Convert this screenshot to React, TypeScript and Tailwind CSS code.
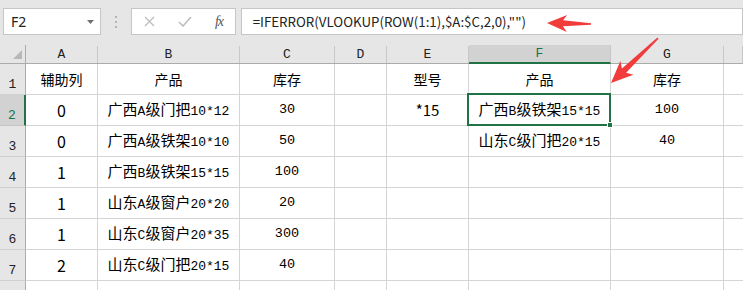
import type { ReactNode } from 'react'

const YAHEI = "font-['Noto_Sans_CJK_SC',sans-serif]"
const GRID = 'grid grid-cols-[26px_72px_142px_95px_52px_82px_142px_113px_19px]'

// SimSun-like text: CJK in sans CJK, ascii runs in a narrow monospace
function Sim({ t }: { t: string }) {
  const parts = t.match(/[\x00-\x7f]+|[^\x00-\x7f]+/g) ?? []
  return (
    <span className="font-['Noto_Sans_CJK_SC',sans-serif] text-[15px]">
      {parts.map((p, i) =>
        /^[\x00-\x7f]/.test(p) ? (
          <span key={i} className="font-['Liberation_Mono',monospace] text-[13px]">
            {p}
          </span>
        ) : (
          <span key={i}>{p}</span>
        ),
      )}
    </span>
  )
}

function Num({ v }: { v: string }) {
  return <span className="font-['Liberation_Mono',monospace] text-[13.5px]">{v}</span>
}

function Big({ v }: { v: string }) {
  return <span className={`${YAHEI} text-[16px]`}>{v}</span>
}

function Head({ v }: { v: string }) {
  return <span className={`${YAHEI} text-[14px]`}>{v}</span>
}

type Row = { n: number; cells: ReactNode[] }

const rows: Row[] = [
  { n: 1, cells: [<Head v="辅助列" />, <Head v="产品" />, <Head v="库存" />, null, <Head v="型号" />, <Head v="产品" />, <Head v="库存" />] },
  { n: 2, cells: [<Big v="0" />, <Sim t="广西A级门把10*12" />, <Num v="30" />, null, <span className={`${YAHEI} text-[15px]`}>*15</span>, <Sim t="广西B级铁架15*15" />, <Num v="100" />] },
  { n: 3, cells: [<Big v="0" />, <Sim t="广西A级铁架10*10" />, <Num v="50" />, null, null, <Sim t="山东C级门把20*15" />, <Num v="40" />] },
  { n: 4, cells: [<Big v="1" />, <Sim t="广西B级铁架15*15" />, <Num v="100" />, null, null, null, null] },
  { n: 5, cells: [<Big v="1" />, <Sim t="山东A级窗户20*20" />, <Num v="20" />, null, null, null, null] },
  { n: 6, cells: [<Big v="1" />, <Sim t="山东C级窗户20*35" />, <Num v="300" />, null, null, null, null] },
  { n: 7, cells: [<Big v="2" />, <Sim t="山东C级门把20*15" />, <Num v="40" />, null, null, null, null] },
  { n: 8, cells: [null, null, null, null, null, null, null] },
]

const letters = ['A', 'B', 'C', 'D', 'E', 'F', 'G', '']

function Arrow({ x, y, angle, len, head, half }: { x: number; y: number; angle: number; len: number; head: number; half: number }) {
  const pts = [
    [0, 0],
    [head, -half],
    [head - 4, -3],
    [len, -0.8],
    [len, 0.8],
    [head - 4, 3],
    [head, half],
  ]
    .map((p) => p.join(','))
    .join(' ')
  return <polygon points={pts} fill="#f23b3b" transform={`translate(${x} ${y}) rotate(${angle})`} />
}

export default function App() {
  return (
    <div className="relative w-[743px] h-[290px] overflow-hidden bg-white text-black">
      {/* formula bar */}
      <div className="h-[45px] bg-[#e6e6e6] flex items-start pt-[8px] pl-[3px]">
        <div className="w-[101px] h-[27px] bg-white border border-[#c6c6c6] flex items-center justify-between pl-[7px] pr-[6px]">
          <span className="font-['Noto_Sans',sans-serif] text-[14px] text-[#222]">F2</span>
          <svg width="7" height="4" viewBox="0 0 7 4">
            <path d="M0 0h7L3.5 4z" fill="#707070" />
          </svg>
        </div>
        <div className="w-[31px] h-[27px] flex flex-col items-center justify-center gap-[3px]">
          <span className="w-[2px] h-[2px] bg-[#b4b4b4]" />
          <span className="w-[2px] h-[2px] bg-[#b4b4b4]" />
          <span className="w-[2px] h-[2px] bg-[#b4b4b4]" />
        </div>
        <div className="w-[108px] h-[27px] bg-white border border-[#c6c6c6] flex items-center pl-[12px] gap-[23px]">
          <svg width="11" height="11" viewBox="0 0 11 11">
            <path d="M1 1l9 9M10 1l-9 9" stroke="#bdbdbd" strokeWidth="1.3" />
          </svg>
          <svg width="14" height="11" viewBox="0 0 14 11">
            <path d="M1 6l4 4 8-9" stroke="#bdbdbd" strokeWidth="1.6" fill="none" />
          </svg>
          <span className="font-['Liberation_Serif',serif] italic text-[14px] text-[#555] tracking-[-1px]">fx</span>
        </div>
        <div className="ml-[5px] w-[520px] h-[27px] bg-white border border-[#c6c6c6] flex items-center pl-[11px]">
          <span className={`${YAHEI} text-[13.3px] text-[#222]`}>=IFERROR(VLOOKUP(ROW(1:1),$A:$C,2,0),"")</span>
        </div>
      </div>

      {/* column headers */}
      <div className={`${GRID} h-[19px] bg-[#e6e6e6] border-b border-[#ababab]`}>
        <div className="border-r border-[#ababab] flex items-end justify-end pr-[3px] pb-[4px]">
          <svg width="9" height="9" viewBox="0 0 9 9">
            <path d="M9 0v9H0z" fill="#b8b8b8" />
          </svg>
        </div>
        {letters.map((l, i) => (
          <div
            key={i}
            className={
              l === 'F'
                ? 'bg-[#d2d2d2] border-r border-[#c6c6c6] border-b-2 border-b-[#217346] -mb-[1px] flex items-center justify-center text-[#217346]'
                : 'border-r border-[#c8c8c8] mt-[1px] flex items-center justify-center text-[#222]'
            }
          >
            <span className="font-['Liberation_Mono',monospace] text-[13px] leading-none">{l}</span>
          </div>
        ))}
      </div>

      {/* rows */}
      {rows.map((r) => (
        <div key={r.n} className={`${GRID} h-[31px]`}>
          <div
            className={
              r.n === 2
                ? 'bg-[#d2d2d2] border-r-2 border-r-[#217346] border-b border-b-[#c6c6c6] flex items-end justify-center pb-[1px] text-[#217346]'
                : 'bg-[#e6e6e6] border-r border-r-[#ababab] border-b border-b-[#d0d0d0] flex items-end justify-center pb-[1px] text-[#222]'
            }
          >
            {r.n < 8 && <span className="font-['Liberation_Mono',monospace] text-[13px] leading-none pb-[2px]">{r.n}</span>}
          </div>
          {r.cells.map((c, i) => (
            <div key={i} className="relative border-r border-b border-[#d4d4d4] flex items-center justify-center whitespace-nowrap">
              {c}
              {r.n === 2 && i === 5 && (
                <div className="absolute -left-[2px] -top-[2px] -right-[1px] -bottom-[1px] border-2 border-[#217346] z-10">
                  <div className="absolute -right-[4px] -bottom-[4px] w-[6px] h-[6px] bg-[#217346] border border-white" />
                </div>
              )}
            </div>
          ))}
          <div className="border-b border-[#d4d4d4]" />
        </div>
      ))}

      {/* annotation arrows */}
      <svg className="absolute inset-0 pointer-events-none z-20" width="743" height="290">
        <Arrow x={547} y={23} angle={1.3} len={44} head={20} half={8.5} />
        <Arrow x={611} y={83} angle={-43.7} len={65} head={22} half={9.5} />
      </svg>
    </div>
  )
}
